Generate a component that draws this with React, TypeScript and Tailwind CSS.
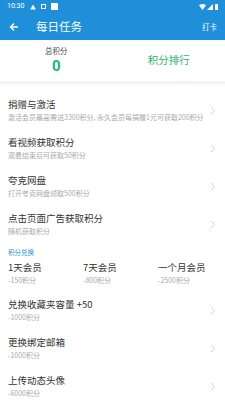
import React from "react";

const font = { fontFamily: '"Noto Sans CJK SC", "Noto Sans", sans-serif' };

function Chevron() {
  return (
    <svg width="6" height="9" viewBox="0 0 6 9" className="shrink-0">
      <path d="M1 1 L4.5 4.5 L1 8" fill="none" stroke="#d4d4d4" strokeWidth="1" />
    </svg>
  );
}

function Item({ title, sub }: { title: string; sub: string }) {
  return (
    <div className="flex items-center pl-[8px] pr-[9px] h-[38px]">
      <div className="flex-1 min-w-0 flex flex-col">
        <div className="text-[9.5px] leading-[13px] text-[#333]">{title}</div>
        <div className="text-[7px] leading-[11px] text-[#aaa] whitespace-nowrap mt-[1px]">{sub}</div>
      </div>
      <Chevron />
    </div>
  );
}

export default function App() {
  return (
    <div className="w-[225px] h-[400px] bg-white overflow-hidden" style={font}>
      {/* Status bar */}
      <div className="h-[13px] bg-[#1e8fd8] flex items-center px-[7px] text-white">
        <span className="text-[7px] leading-none" style={{ fontFamily: "Roboto, sans-serif" }}>10:30</span>
        <svg width="6" height="6" viewBox="0 0 6 6" className="ml-[6px]">
          <path d="M3 0.5 L5.8 5.5 L0.2 5.5 Z" fill="white" />
        </svg>
        <div className="ml-[5px] w-[5px] h-[5px] border-[1.5px] border-white" />
        <div className="ml-[5px] w-[7px] h-[7px] bg-white" />
        <div className="flex-1" />
        <svg width="7" height="6" viewBox="0 0 7 6">
          <path d="M0 1.2 Q3.5 -1 7 1.2 L3.5 6 Z" fill="white" />
        </svg>
        <svg width="6" height="6" viewBox="0 0 6 6" className="ml-[1px]">
          <path d="M6 0 L6 6 L0 6 Z" fill="white" />
        </svg>
        <div className="ml-[2px] w-[3px] h-[6px] bg-white rounded-[0.5px]" />
      </div>
      {/* Toolbar */}
      <div className="h-[27px] bg-[#1e8fd8] flex items-center text-white">
        <svg width="10" height="10" viewBox="0 0 10 10" className="ml-[9px]">
          <path d="M9 5 H1.5 M5 1.5 L1.5 5 L5 8.5" fill="none" stroke="white" strokeWidth="1.3" />
        </svg>
        <span className="ml-[17px] text-[11.5px] leading-none">每日任务</span>
        <div className="flex-1" />
        <span className="mr-[8px] text-[7.5px] leading-none">打卡</span>
      </div>
      {/* Header */}
      <div className="h-[44px] flex items-center border-b-[3px] border-[#f3f3f3]">
        <div className="w-1/2 flex flex-col items-center">
          <span className="text-[7.5px] leading-[10px] text-[#444]">总积分</span>
          <span className="text-[15px] leading-[18px] font-bold text-[#22b573] mt-[1px]" style={{ fontFamily: "Roboto, sans-serif" }}>0</span>
        </div>
        <div className="w-1/2 flex justify-center">
          <span className="text-[10.5px] leading-none text-[#2db36e]">积分排行</span>
        </div>
      </div>
      <div className="pt-[7px]">
        <Item title="捐赠与激活" sub="激活会员最高需送3300积分, 永久会员每捐赠1元可获取200积分" />
        <Item title="看视频获取积分" sub="观看结束后可获取50积分" />
        <Item title="夸克网盘" sub="打开夸克网盘领取500积分" />
        <Item title="点击页面广告获取积分" sub="随机获取积分" />
      </div>
      <div className="pl-[8px] pt-[4px] text-[6.5px] leading-[10px] text-[#1e8fd8]">积分兑换</div>
      <div className="grid grid-cols-3 pt-[4px] h-[34px]">
        {[
          ["1天会员", "-150积分"],
          ["7天会员", "-800积分"],
          ["一个月会员", "-2500积分"],
        ].map(([t, s]) => (
          <div key={t} className="flex flex-col pl-[8px]">
            <span className="text-[9.5px] leading-[13px] text-[#333]">{t}</span>
            <span className="text-[7px] leading-[11px] text-[#aaa] mt-[1px]">{s}</span>
          </div>
        ))}
      </div>
      <Item title="兑换收藏夹容量 +50" sub="-1000积分" />
      <Item title="更换绑定邮箱" sub="-1000积分" />
      <Item title="上传动态头像" sub="-6000积分" />
    </div>
  );
}
